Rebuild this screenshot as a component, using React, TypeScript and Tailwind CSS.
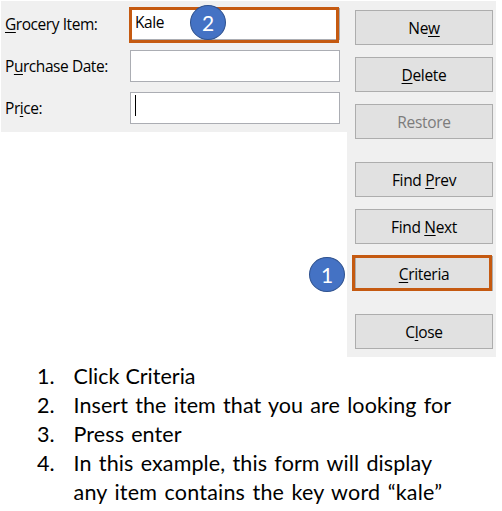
import type { ReactNode } from "react";

function Key({ children }: { children: ReactNode }) {
  return <span className="underline decoration-1 underline-offset-2 [text-decoration-skip-ink:none]">{children}</span>;
}

function Badge({ value, className }: { value: string; className: string }) {
  return (
    <span
      className={`absolute flex h-[35px] w-9 items-center justify-center rounded-[50%] border border-[#2f528f] bg-[#4472c4] pb-px font-[Lato,sans-serif] text-[21px] leading-none text-white ${className}`}
    >
      {value}
    </span>
  );
}

function Field({ label, children }: { label: ReactNode; children?: ReactNode }) {
  return (
    <div className="flex h-8">
      <label className="w-[125px] pt-[5px] text-[15.5px] leading-[22px] tracking-[-0.44px] whitespace-nowrap">{label}</label>
      <div className="relative h-8 w-[210px] border border-[#abadb3] bg-white">{children}</div>
    </div>
  );
}

function Action({ children, className = "", disabled = false }: { children: ReactNode; className?: string; disabled?: boolean }) {
  return (
    <button
      disabled={disabled}
      className={`relative h-[35px] w-[138px] shrink-0 border border-[#adadad] bg-[#e1e1e1] text-[15.5px] leading-[22px] tracking-[-0.32px] disabled:text-[#7c7c7c] ${className}`}
    >
      {children}
    </button>
  );
}

const steps: { text: ReactNode; spacing: string }[] = [
  { text: "Click Criteria", spacing: "tracking-[0.02px] [word-spacing:0.5px]" },
  { text: "Insert the item that you are looking for", spacing: "tracking-[0.08px] [word-spacing:1.6px]" },
  { text: "Press enter", spacing: "tracking-[0.1px] [word-spacing:1.5px]" },
  {
    text: (
      <>
        In this example, this form will display
        <br />
        <span className="tracking-[0.2px]">any item contains the key word “kale”</span>
      </>
    ),
    spacing: "tracking-[0.1px] [word-spacing:1.7px]",
  },
];

export default function App() {
  return (
    <main className="h-[511px] w-[502px] overflow-hidden bg-white pt-px pl-px font-['Open_Sans','Noto_Sans',sans-serif] text-black">
      <div className="flex items-start">
        <section className="flex h-[131px] w-[346px] flex-col gap-[10px] bg-[#f0f0f0] pt-[7px] pl-[4px]">
          <Field label={<><Key>G</Key>rocery Item:</>}>
            <span className="block pt-[2px] pl-[4px] text-[15.5px] leading-[22px] tracking-[-0.4px]">Kale</span>
            <span className="absolute -top-[2px] -left-[2px] h-9 w-[210px] border-3 border-[#c55a11]" />
            <Badge value="2" className="-top-[4px] left-[59px]" />
          </Field>
          <Field label={<>P<Key>u</Key>rchase Date:</>} />
          <Field label={<>Pr<Key>i</Key>ce:</>}>
            <span className="mt-[2px] ml-[4px] block h-[21px] w-px bg-black" />
          </Field>
        </section>
        <section className="flex h-[356px] w-[149px] flex-col items-start gap-3 bg-[#f0f0f0] pt-[9px] pl-2">
          <Action>Ne<Key>w</Key></Action>
          <Action><Key>D</Key>elete</Action>
          <Action disabled>Restore</Action>
          <Action className="mt-[11px]">Find <Key>P</Key>rev</Action>
          <Action>Find <Key>N</Key>ext</Action>
          <Action>
            <Key>C</Key>riteria
            <span className="absolute -top-[2px] -left-[4px] h-9 w-[140px] border-3 border-[#c55a11]" />
            <Badge value="1" className="top-0 -left-[47px]" />
          </Action>
          <Action className="mt-[11px]">C<Key>l</Key>ose</Action>
        </section>
      </div>
      <ol className="mt-[5px] pl-[36px] font-[Lato,sans-serif] text-[21.5px] leading-[29px]">
        {steps.map((step, index) => (
          <li key={index} className={`flex whitespace-nowrap ${step.spacing}`}>
            <span className="w-[36.5px]">{index + 1}.</span>
            <span>{step.text}</span>
          </li>
        ))}
      </ol>
    </main>
  );
}
